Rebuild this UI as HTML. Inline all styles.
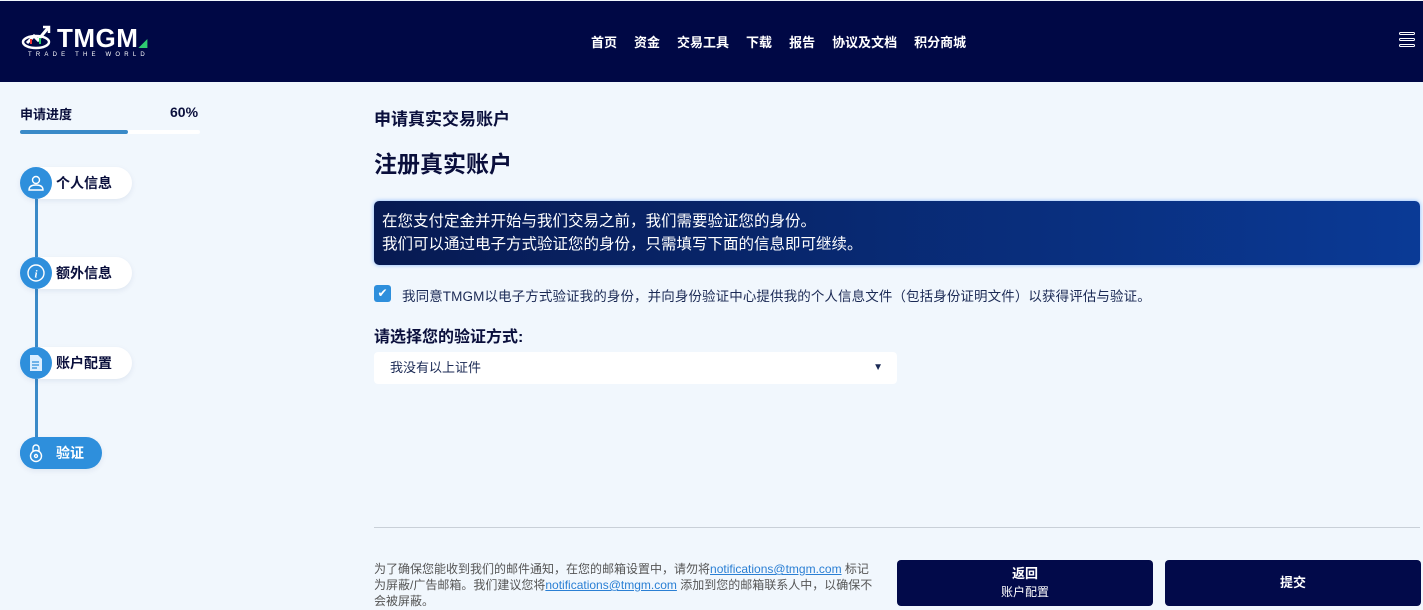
<!DOCTYPE html>
<html><head><meta charset="utf-8"><style>
*{box-sizing:border-box;margin:0;padding:0}
body{width:1423px;height:610px;overflow:hidden;background:#f1f7fd;font-family:"Liberation Sans","Noto Sans CJK SC",sans-serif;color:#0a0f3c;position:relative}
.hdr{position:absolute;left:0;top:1px;width:1423px;height:81px;background:#000845}
.nav{position:absolute;top:31px;left:591px;display:flex;gap:0;color:#fff;font-size:13px;font-weight:bold}
.nav span{margin-right:17px}
.abs{position:absolute}
.pill{position:absolute;left:20px;height:32px;border-radius:16px;background:#fff;box-shadow:0 2px 6px rgba(0,40,100,.08);padding-left:36px;line-height:32px;font-size:14px;font-weight:bold;width:112px}
.circ{position:absolute;left:0;top:0;width:32px;height:32px;border-radius:50%;background:#2e8fdc;display:flex;align-items:center;justify-content:center}
.btn{position:absolute;top:560px;height:46px;width:256px;background:#020a4a;border-radius:4px;color:#fff;text-align:center;font-weight:bold;font-size:13px}
a{color:#2a7fd4;text-decoration:underline}
</style></head><body>
<div class="hdr">
 <svg class="abs" style="left:20px;top:24px" width="34" height="26" viewBox="0 0 32 26"><ellipse cx="15" cy="17" rx="13" ry="6" fill="none" stroke="#fff" stroke-width="2.5"/><path d="M6 18 L13 11 L17 15 L27 3" fill="none" stroke="#fff" stroke-width="3"/><path d="M22 2 L28 2 L28 8" fill="none" stroke="#fff" stroke-width="2.5"/><rect x="9" y="14" width="2" height="5" fill="#e33"/><rect x="18" y="13" width="2" height="6" fill="#2c6"/></svg>
 <div class="abs" style="left:57px;top:22px;color:#fff;font-size:26px;font-weight:900;letter-spacing:.5px">TMGM<span style="color:#2ecc71;font-size:9px">◢</span></div>
 <div class="abs" style="left:28px;top:51px;color:#fff;font-size:6px;letter-spacing:4.2px">TRADE THE WORLD</div>
 <div class="nav"><span>首页</span><span>资金</span><span>交易工具</span><span>下载</span><span>报告</span><span>协议及文档</span><span>积分商城</span></div>
 <div class="abs" style="left:1399px;top:31px;width:16px"><div style="height:3px;border:1px solid #fff;border-radius:2px;margin-bottom:3px"></div><div style="height:3px;border:1px solid #fff;border-radius:2px;margin-bottom:3px"></div><div style="height:3px;border:1px solid #fff;border-radius:2px"></div></div>
</div>
<div class="abs" style="left:20px;top:104px;font-size:13px;font-weight:bold">申请进度</div>
<div class="abs" style="left:170px;top:104px;font-size:14px;font-weight:bold">60%</div>
<div class="abs" style="left:20px;top:130px;width:180px;height:4px;background:#fff;border-radius:2px"><div style="width:108px;height:4px;background:#3a8ac8;border-radius:2px"></div></div>
<div class="abs" style="left:35px;top:190px;width:3px;height:250px;background:#3a8ac8"></div>
<div class="pill" style="top:167px"><div class="circ"><svg width="18" height="18" viewBox="0 0 18 18" fill="none" stroke="#fff" stroke-width="1.4"><circle cx="9" cy="6" r="3.5"/><path d="M2 16 Q2 11 9 11 Q16 11 16 16 Z"/></svg></div>个人信息</div>
<div class="pill" style="top:257px"><div class="circ"><svg width="20" height="20" viewBox="0 0 20 20" fill="none" stroke="#fff" stroke-width="1.4"><circle cx="10" cy="10" r="8"/><text x="10" y="14.5" fill="#fff" stroke="none" font-size="11" font-style="italic" font-weight="bold" text-anchor="middle" font-family="Liberation Serif">i</text></svg></div>额外信息</div>
<div class="pill" style="top:347px"><div class="circ"><svg width="16" height="18" viewBox="0 0 16 18"><path d="M2 1 H10 L14 5 V17 H2 Z" fill="#dbeeff"/><path d="M4 8 H11 M4 11 H11 M4 14 H9" stroke="#2e8fdc" stroke-width="1.2"/></svg></div>账户配置</div>
<div class="pill" style="top:437px;width:82px;background:#2e8fdc;color:#fff"><div class="circ"><svg width="16" height="20" viewBox="0 0 16 20" fill="none" stroke="#fff" stroke-width="1.4"><path d="M5 8 V5 A3 3 0 0 1 11 5 V8"/><circle cx="8" cy="13" r="5.5"/><circle cx="8" cy="13" r="1.5"/></svg></div>验证</div>

<div class="abs" style="left:374px;top:105px;font-size:17px;font-weight:bold">申请真实交易账户</div>
<div class="abs" style="left:374px;top:145px;font-size:23px;font-weight:bold">注册真实账户</div>
<div class="abs" style="left:374px;top:201px;width:1046px;height:64px;border-radius:5px;background:linear-gradient(90deg,#071a52,#0a3a96);box-shadow:0 0 4px rgba(60,140,255,.6);color:#fff;font-size:15.5px;line-height:23px;padding:9px 8px">在您支付定金并开始与我们交易之前，我们需要验证您的身份。<br>我们可以通过电子方式验证您的身份，只需填写下面的信息即可继续。</div>
<div class="abs" style="left:374px;top:285px;width:17px;height:17px;border-radius:3px;background:#2e8fdc;color:#fff;font-size:12px;text-align:center;line-height:17px">✔</div>
<div class="abs" style="left:402px;top:285px;font-size:13.5px;color:#1b2a55;letter-spacing:.1px">我同意TMGM以电子方式验证我的身份，并向身份验证中心提供我的个人信息文件（包括身份证明文件）以获得评估与验证。</div>
<div class="abs" style="left:374px;top:323px;font-size:16px;font-weight:bold">请选择您的验证方式:</div>
<div class="abs" style="left:374px;top:352px;width:523px;height:32px;background:#fff;border-radius:4px;font-size:13px;line-height:32px;padding-left:16px;color:#1b2a55">我没有以上证件<span style="position:absolute;right:14px;top:0;font-size:10px">▼</span></div>
<div class="abs" style="left:374px;top:527px;width:1046px;height:1px;background:#c9d0d8"></div>
<div class="abs" style="left:374px;top:561px;width:505px;font-size:12px;line-height:16px;color:#555">为了确保您能收到我们的邮件通知，在您的邮箱设置中，请勿将<a>notifications@tmgm.com</a> 标记为屏蔽/广告邮箱。我们建议您将<a>notifications@tmgm.com</a> 添加到您的邮箱联系人中，以确保不会被屏蔽。</div>
<div class="btn" style="left:897px;padding-top:5px;line-height:18px">返回<br><span style="font-weight:normal;font-size:12px">账户配置</span></div>
<div class="btn" style="left:1165px;line-height:46px">提交</div>
</body></html>
